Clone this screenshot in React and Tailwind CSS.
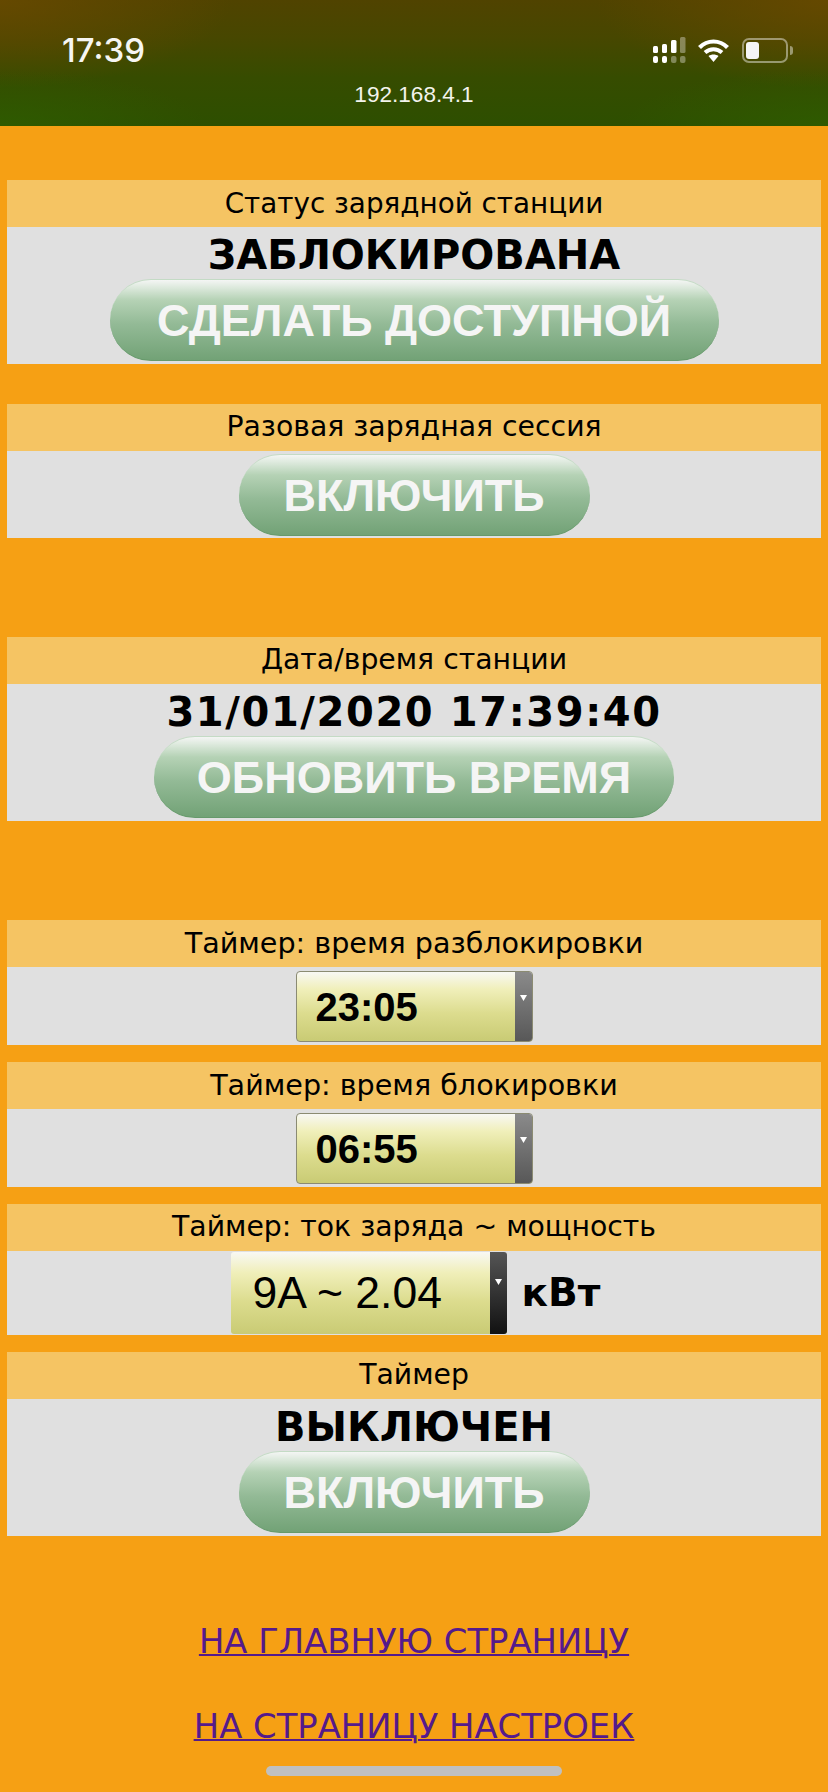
const dejavu = "font-['DejaVu_Sans',Verdana,sans-serif]";
const lib = "font-['Liberation_Sans',Arial,sans-serif]";

function Section({ title, className = "", bodyClass = "", titleClass = "text-[28.3px]", children }) {
  return (
    <section className={className}>
      <div className={`h-[47px] bg-[#f5c463] flex items-center justify-center text-black whitespace-nowrap ${titleClass} ${dejavu}`}>{title}</div>
      <div className={`bg-[#e0e0e0] flex flex-col items-center ${bodyClass}`}>{children}</div>
    </section>
  );
}

function Btn({ w, children }) {
  return (
    <button className={`h-[82px] rounded-[41px] border-t border-t-[#c4dbc5] border-b border-b-[#669a6b] bg-[linear-gradient(to_bottom,#f4f5f4_0%,#e0ebe0_8%,#b5d2b5_25%,#93ba96_55%,#72a276_100%)] flex items-center justify-center whitespace-nowrap pt-[1px] text-[45px] font-bold text-[#f5f5f5] ${lib} ${w}`}>
      {children}
    </button>
  );
}

function Sel({ children }) {
  return (
    <div className="w-[237px] h-[71px] rounded-[4px] border border-[#8b8b72] flex overflow-hidden bg-[linear-gradient(to_bottom,#f8f8f4_0%,#f0efba_25%,#dcdc8e_60%,#c9cb74_100%)]">
      <div className={`flex-1 flex items-center pl-[19px] pt-[1px] text-[40px] font-bold text-black ${lib}`}>{children}</div>
      <div className="w-[17px] flex justify-center pt-[23px] bg-[linear-gradient(to_bottom,#8a8a8a,#585858)]">
        <svg width="7" height="6" viewBox="0 0 7 6"><path d="M0 0h7L3.5 6z" fill="#fff" /></svg>
      </div>
    </div>
  );
}

function Title({ className = "", children }) {
  return <div className={`h-[52px] leading-[56px] text-[40px] font-bold text-black whitespace-nowrap ${dejavu} ${className}`}>{children}</div>;
}

function StatusIcons() {
  return (
    <div className="flex items-center">
      <svg width="33" height="26" viewBox="0 0 33 26" className="mr-[12px]">
        <g fill="#fff">
          <rect x="0" y="9" width="5" height="7" rx="1.5" />
          <rect x="9" y="7" width="5" height="9" rx="1.5" />
          <rect x="18" y="3" width="5.5" height="13" rx="1.5" />
          <rect x="0" y="19" width="5" height="7" rx="2" />
          <rect x="9" y="19" width="5" height="7" rx="2" />
        </g>
        <g fill="#fff" fillOpacity="0.35">
          <rect x="27" y="0" width="5.5" height="16" rx="1.5" />
          <rect x="18" y="19" width="5.5" height="7" rx="2" />
          <rect x="27" y="19" width="5.5" height="7" rx="2" />
        </g>
      </svg>
      <svg width="31" height="24" viewBox="0 0 31 24" className="mr-[13px]">
        <path d="M1.5 9.5C9.5 1.5 21.5 1.5 29.5 9.5" fill="none" stroke="#fff" strokeWidth="4.2" />
        <path d="M7 14.5C12 10 19 10 24 14.5" fill="none" stroke="#fff" strokeWidth="4" />
        <path d="M10.5 18C13.5 16 17.5 16 20.5 18L15.5 24z" fill="#fff" />
      </svg>
      <div className="relative w-[46px] h-[25px] rounded-[7px] border-2 border-[#ffffff70] p-[2px]">
        <div className="w-[13px] h-full rounded-[3px] bg-[#f5f5f5]" />
        <div className="absolute right-[-7px] top-[6px] w-[3px] h-[9px] rounded-r-[3px] bg-[#ffffff70]" />
      </div>
    </div>
  );
}

export default function App() {
  return (
    <div className="relative w-[828px] h-[1792px] overflow-hidden bg-[#f6a014]">
      <header className="h-[126px] bg-[radial-gradient(ellipse_28%_70%_at_0%_0%,#6a4a00cc,transparent),radial-gradient(ellipse_28%_70%_at_100%_0%,#6a4a00cc,transparent),radial-gradient(ellipse_25%_45%_at_0%_100%,#2f6000aa,transparent),radial-gradient(ellipse_25%_45%_at_100%_100%,#2f6000aa,transparent),linear-gradient(to_bottom,#504300_0%,#474700_30%,#364c00_62%,#2d4f00_100%)]">
        <div className="flex items-center justify-between pl-[62px] pr-[40px] pt-[30px]">
          <span className="text-[33px] leading-[40px] font-medium text-[#f6f6f2] font-['Inter',sans-serif]">17:39</span>
          <StatusIcons />
        </div>
        <div className={`mt-[12px] text-center text-[22.6px] leading-[25px] text-[#f3f3ec] ${lib}`}>192.168.4.1</div>
      </header>

      <main className="px-[7px] pt-[54px]">
        <Section title="Статус зарядной станции" titleClass="text-[27.8px]" bodyClass="pb-[3px]">
          <Title>ЗАБЛОКИРОВАНА</Title>
          <Btn w="w-[609px]">СДЕЛАТЬ ДОСТУПНОЙ</Btn>
        </Section>

        <Section title="Разовая зарядная сессия" className="mt-[40px]" bodyClass="pt-[3px] pb-[2px]">
          <Btn w="w-[351px]">ВКЛЮЧИТЬ</Btn>
        </Section>

        <Section title="Дата/время станции" className="mt-[99px]" bodyClass="pb-[3px]">
          <Title className="tracking-[1.6px]">31/01/2020 17:39:40</Title>
          <Btn w="w-[520px]">ОБНОВИТЬ ВРЕМЯ</Btn>
        </Section>

        <Section title="Таймер: время разблокировки" titleClass="text-[28.6px]" className="mt-[99px]" bodyClass="pt-[4px] pb-[3px]">
          <Sel>23:05</Sel>
        </Section>

        <Section title="Таймер: время блокировки" titleClass="text-[28.6px]" className="mt-[17px]" bodyClass="pt-[4px] pb-[3px]">
          <Sel>06:55</Sel>
        </Section>

        <Section title="Таймер: ток заряда ~ мощность" className="mt-[17px]" bodyClass="py-[1px]">
          <div className="flex items-center gap-[15px] ml-[3px]">
            <div className="w-[276px] h-[82px] rounded-[3px] flex overflow-hidden bg-[linear-gradient(to_bottom,#f8f8f4_0%,#f0efba_25%,#dcdc8e_60%,#c9cb74_100%)]">
              <div className={`flex-1 flex items-center pl-[22px] text-[44.5px] text-black whitespace-nowrap ${lib}`}>9A ~ 2.04</div>
              <div className="w-[17px] flex justify-center pt-[27px] bg-[linear-gradient(to_bottom,#555,#111)]">
                <svg width="7" height="6" viewBox="0 0 7 6"><path d="M0 0h7L3.5 6z" fill="#fff" /></svg>
              </div>
            </div>
            <div className={`text-[39px] font-bold text-black ${dejavu}`}>кВт</div>
          </div>
        </Section>

        <Section title="Таймер" className="mt-[17px]" bodyClass="pb-[3px]">
          <Title>ВЫКЛЮЧЕН</Title>
          <Btn w="w-[351px]">ВКЛЮЧИТЬ</Btn>
        </Section>

        <nav className={`mt-[89px] flex flex-col items-center gap-[51px] text-[33.8px] leading-[34px] text-[#551a8b] underline decoration-2 ${dejavu}`}>
          <a href="#home">НА ГЛАВНУЮ СТРАНИЦУ</a>
          <a href="#settings">НА СТРАНИЦУ НАСТРОЕК</a>
        </nav>
      </main>

      <div className="absolute left-[266px] top-[1766px] w-[296px] h-[10px] rounded-full bg-[#c0c0c0]" />
    </div>
  );
}
